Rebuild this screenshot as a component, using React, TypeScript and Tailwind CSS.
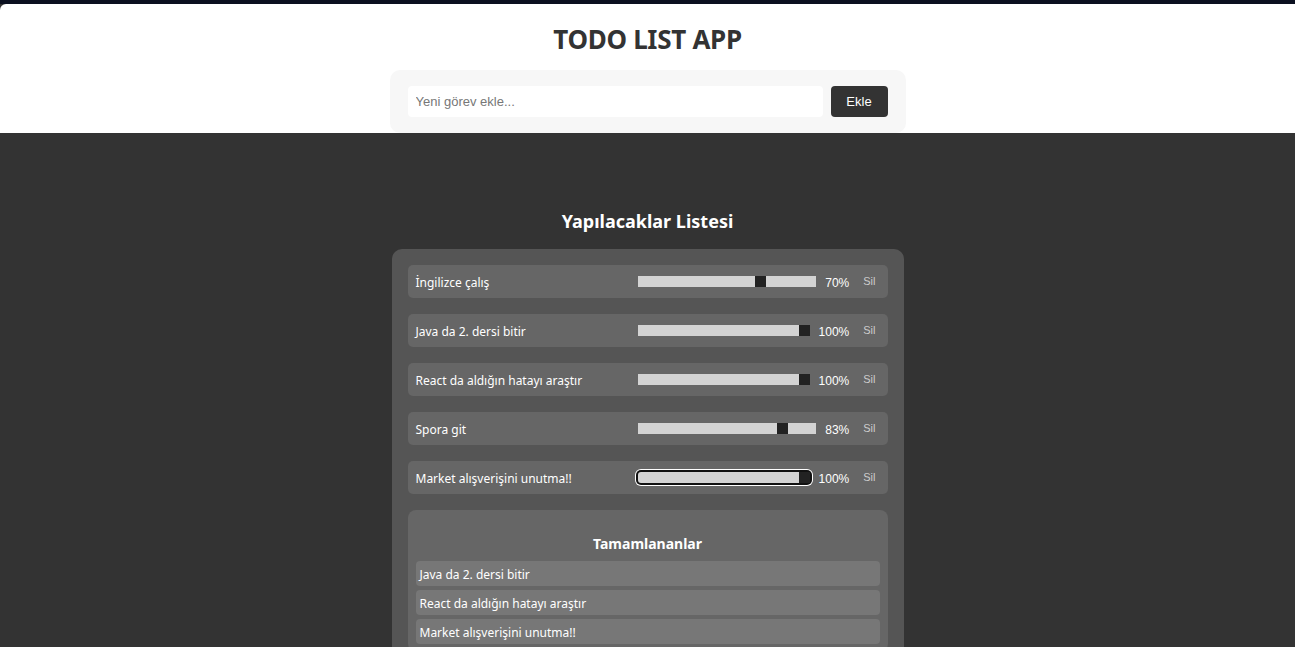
import React from "react";

type Task = { text: string; value: number; focused?: boolean };

const tasks: Task[] = [
  { text: "İngilizce çalış", value: 70 },
  { text: "Java da 2. dersi bitir", value: 100 },
  { text: "React da aldığın hatayı araştır", value: 100 },
  { text: "Spora git", value: 83 },
  { text: "Market alışverişini unutma!!", value: 100, focused: true },
];

const done = [
  "Java da 2. dersi bitir",
  "React da aldığın hatayı araştır",
  "Market alışverişini unutma!!",
];

function Slider({ value, focused }: { value: number; focused?: boolean }) {
  return (
    <div
      className={
        "relative flex-1 h-[11px] bg-[#d3d3d3] " +
        (focused ? "rounded-[3px] shadow-[0_0_0_2px_#111111,0_0_0_3px_#ffffff]" : "")
      }
    >
      <div
        className="absolute top-0 h-[11px] w-[11px] bg-[#222222]"
        style={{ left: `calc((100% - 11px) * ${value / 100})` }}
      />
    </div>
  );
}

export default function App() {
  const sans = { fontFamily: '"Noto Sans", "Open Sans", sans-serif' };
  const arial = { fontFamily: '"Liberation Sans", Arial, sans-serif' };
  return (
    <div className="min-h-[647px] bg-[#333333]" style={sans}>
      <div className="h-[4px] bg-[#0b1020]" />
      <div className="bg-white rounded-tl-[6px] flex flex-col items-center">
        <h1 className="text-[26px] leading-[34px] font-bold text-[#333333] mt-[18px] tracking-[-0.3px]">
          TODO LIST APP
        </h1>
        <div className="mt-[14px] w-[516px] bg-[#f7f7f7] rounded-[10px] px-[18px] py-[16px] flex gap-[8px]">
          <input
            className="flex-1 h-[31px] bg-white rounded-[4px] px-[8px] text-[13px] text-[#333] placeholder:text-[#777] outline-none"
            style={arial}
            placeholder="Yeni görev ekle..."
          />
          <button
            className="w-[57px] h-[31px] bg-[#333333] text-white text-[13px] rounded-[4px]"
            style={arial}
          >
            Ekle
          </button>
        </div>
      </div>
      <div className="flex flex-col items-center">
        <h2 className="mt-[75px] text-[18px] leading-[26px] font-bold text-white">
          Yapılacaklar Listesi
        </h2>
        <div className="mt-[15px] w-[512px] bg-[#555555] rounded-[10px] p-[16px] flex flex-col gap-[16px]">
          {tasks.map((t, i) => (
            <div
              key={i}
              className="h-[33px] bg-[#666666] rounded-[5px] flex items-center pl-[8px] pr-[12px]"
            >
              <span className="w-[222px] text-[12px] leading-[16px] pt-[2px] text-white">{t.text}</span>
              <Slider value={t.value} focused={t.focused} />
              <span
                className="ml-[9px] text-[12px] leading-[16px] pt-[2px] text-white"
                style={arial}
              >
                {t.value}%
              </span>
              <button
                className="ml-[14px] text-[11px] text-[#cccccc] -mt-[1px]"
                style={arial}
              >
                Sil
              </button>
            </div>
          ))}
          <div className="bg-[#666666] rounded-[8px] px-[8px] pt-[24px] pb-[8px] flex flex-col">
            <h3 className="text-center text-[14px] leading-[20px] font-bold text-white">
              Tamamlananlar
            </h3>
            <div className="mt-[7px] flex flex-col gap-[4px]">
              {done.map((d, i) => (
                <div
                  key={i}
                  className="h-[25px] bg-[#777777] rounded-[4px] px-[4px] pt-[2px] flex items-center text-[12px] text-white"
                >
                  {d}
                </div>
              ))}
            </div>
          </div>
        </div>
      </div>
    </div>
  );
}
